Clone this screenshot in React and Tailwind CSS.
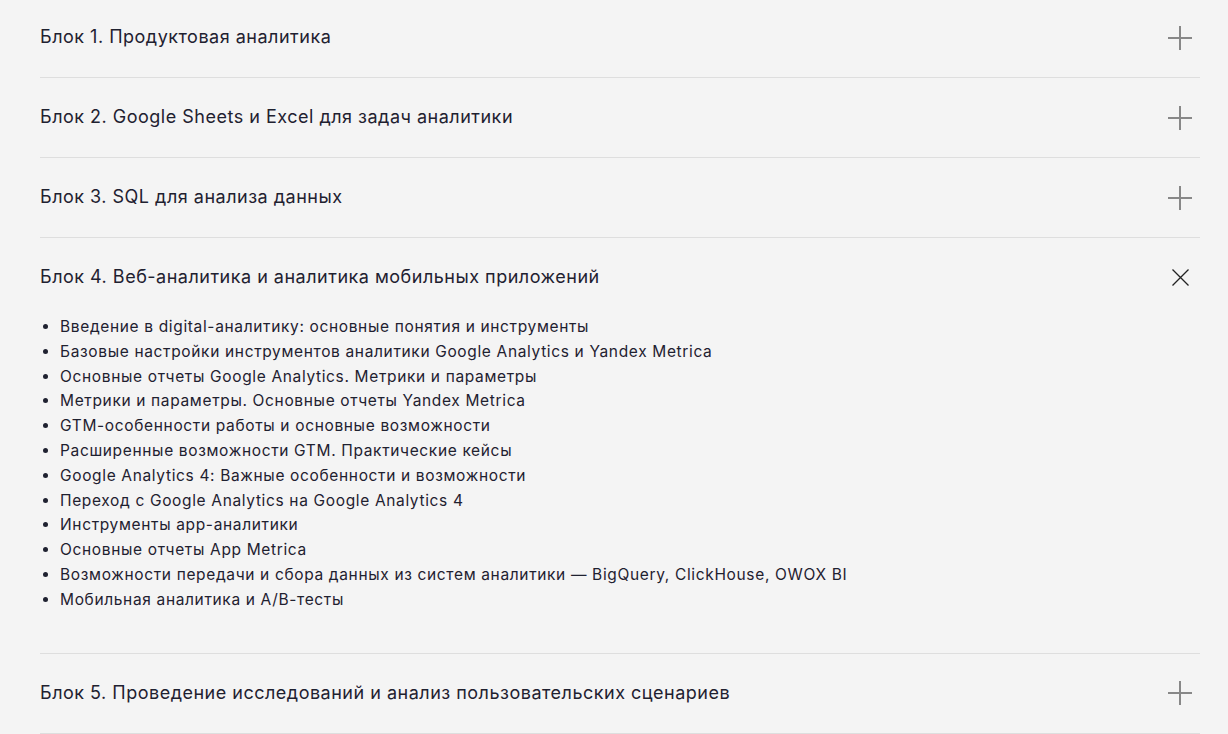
import { useState } from "react";

const blocks = [
  { id: 1, title: "Блок 1. Продуктовая аналитика", items: [] },
  { id: 2, title: "Блок 2. Google Sheets и Excel для задач аналитики", items: [] },
  { id: 3, title: "Блок 3. SQL для анализа данных", items: [] },
  {
    id: 4,
    title: "Блок 4. Веб-аналитика и аналитика мобильных приложений",
    items: [
      "Введение в digital-аналитику: основные понятия и инструменты",
      "Базовые настройки инструментов аналитики Google Analytics и Yandex Metrica",
      "Основные отчеты Google Analytics. Метрики и параметры",
      "Метрики и параметры. Основные отчеты Yandex Metrica",
      "GTM-особенности работы и основные возможности",
      "Расширенные возможности GTM. Практические кейсы",
      "Google Analytics 4: Важные особенности и возможности",
      "Переход с Google Analytics на Google Analytics 4",
      "Инструменты app-аналитики",
      "Основные отчеты App Metrica",
      "Возможности передачи и сбора данных из систем аналитики — BigQuery, ClickHouse, OWOX BI",
      "Мобильная аналитика и A/B-тесты",
    ],
  },
  { id: 5, title: "Блок 5. Проведение исследований и анализ пользовательских сценариев", items: [] },
];

function PlusIcon() {
  return (
    <svg width="24" height="24" viewBox="0 0 24 24" fill="none">
      <path d="M12 0v24M0 12h24" stroke="#888" strokeWidth="2" />
    </svg>
  );
}

function CloseIcon() {
  return (
    <svg width="17" height="17" viewBox="0 0 17 17" fill="none">
      <path d="M0.5 0.5l16 16M16.5 0.5l-16 16" stroke="#222" strokeWidth="1.3" />
    </svg>
  );
}

export default function App() {
  const [open, setOpen] = useState(4);

  return (
    <div className="min-h-screen bg-[#f4f4f4] pl-[40px]" style={{ fontFamily: "Inter, 'Noto Sans', sans-serif" }}>
      <div className="-mt-[2px] w-[1160px]">
        {blocks.map((block) => {
          const isOpen = open === block.id;
          return (
            <div key={block.id} className="border-b border-[#dedede]">
              <button
                type="button"
                onClick={() => setOpen(isOpen ? null : block.id)}
                className="flex h-[79px] w-full items-center justify-between text-left"
              >
                <span className="pb-[2px] text-[18px] text-[#1f2130] tracking-[0.5px]">{block.title}</span>
                <span className="flex w-[40px] items-center justify-center">
                  {isOpen ? <CloseIcon /> : <PlusIcon />}
                </span>
              </button>
              {isOpen && (
                <ul className="-mt-[2px] list-disc pl-[20px] pb-[40px] text-[15.5px] leading-[24.8px] tracking-[0.65px] text-[#1f2130]">
                  {block.items.map((item) => (
                    <li key={item}>{item}</li>
                  ))}
                </ul>
              )}
            </div>
          );
        })}
      </div>
    </div>
  );
}
